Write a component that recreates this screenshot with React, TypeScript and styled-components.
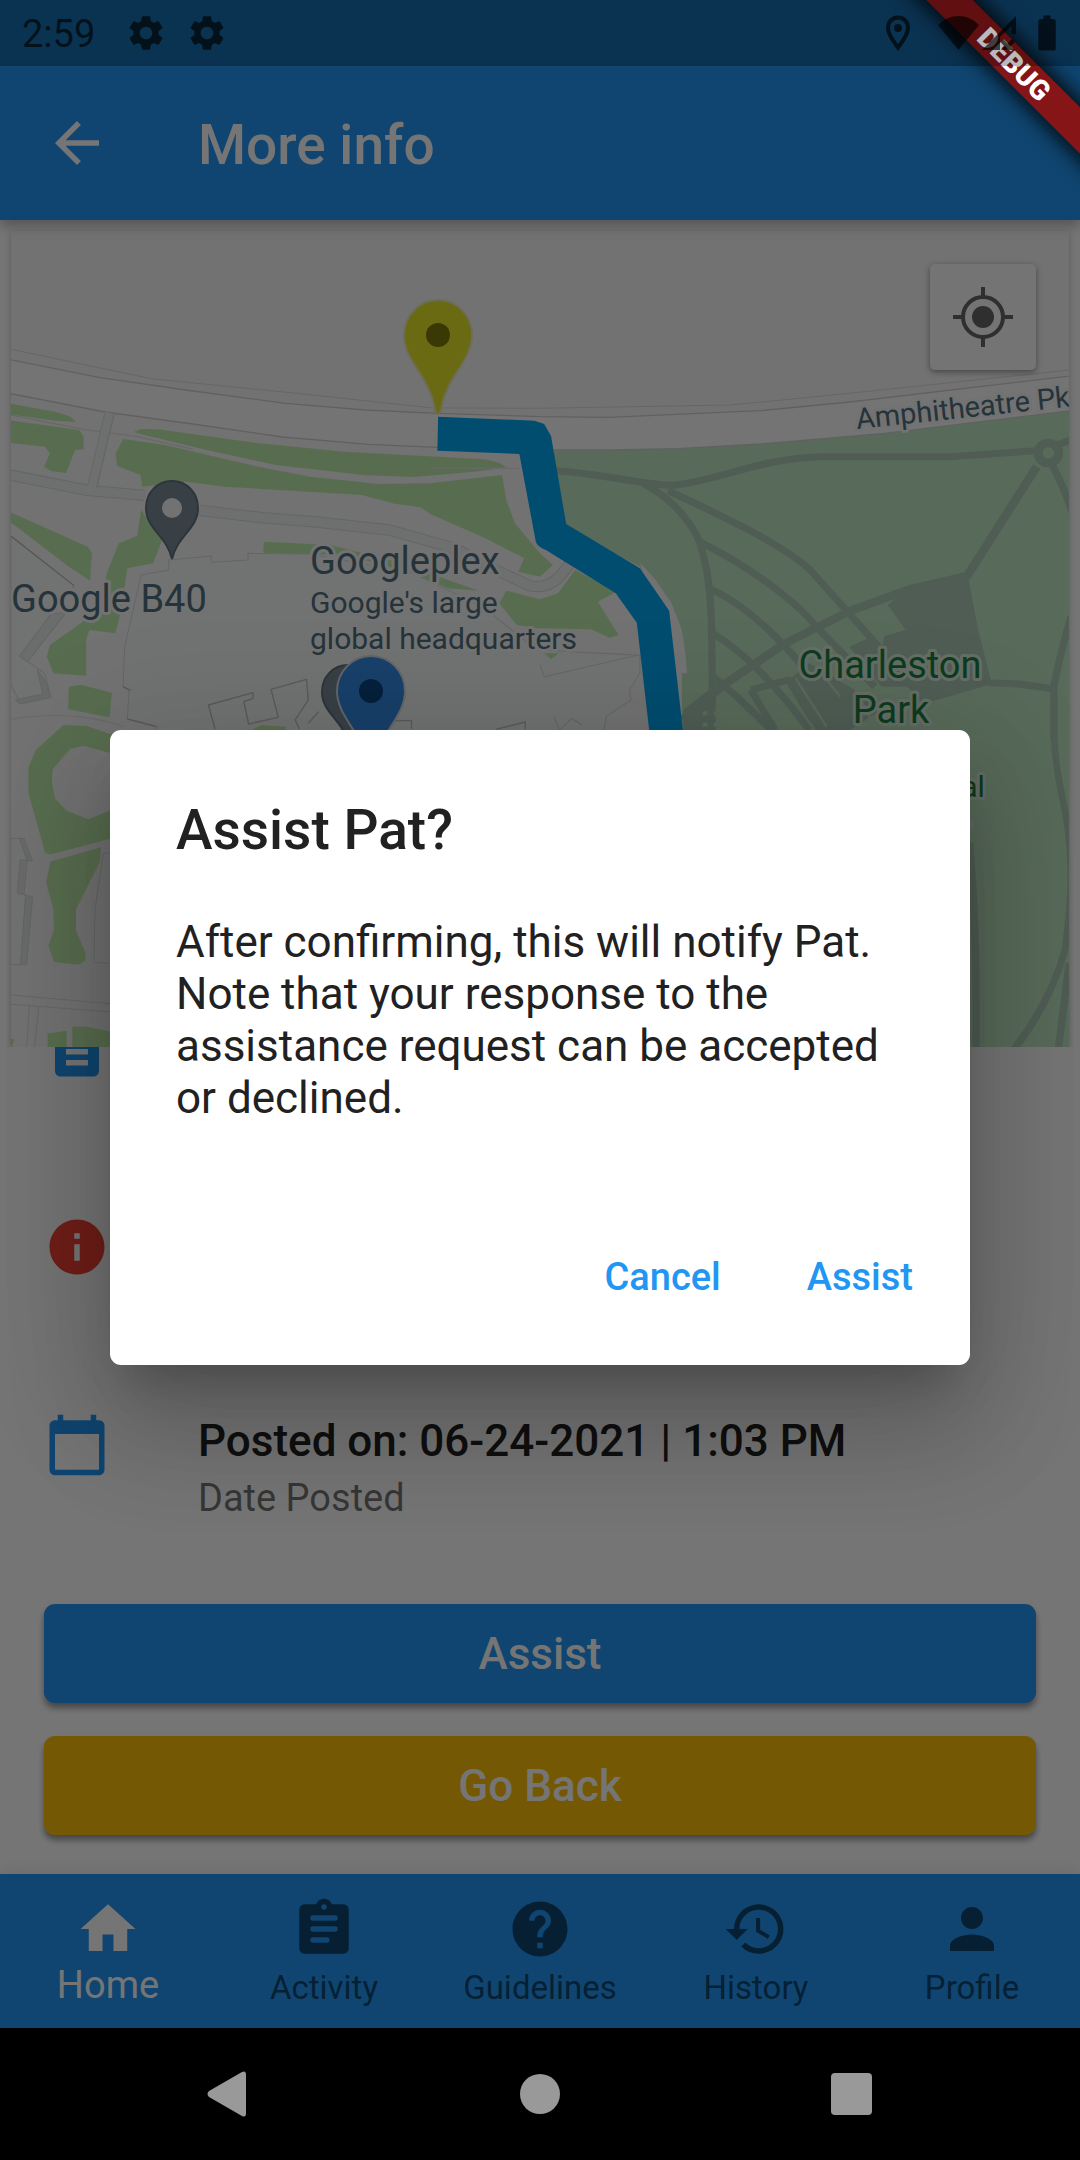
import React from "react";
import styled, { createGlobalStyle } from "styled-components";
import {
  MdArrowBack,
  MdBatteryFull,
  MdCalendarToday,
  MdDescription,
  MdHelp,
  MdHistory,
  MdHome,
  MdInfo,
  MdPerson,
  MdSettings,
} from "react-icons/md";

const blue = "#2196f3";
const amber = "#ffc107";
const red = "#f44336";

const GlobalStyle = createGlobalStyle`
  *, *::before, *::after { box-sizing: border-box; }
  body { margin: 0; background: #000; }
  button { border: 0; padding: 0; font: inherit; cursor: pointer; background: none; }
  svg { display: block; }
`;

const Screen = styled.div`
  position: relative;
  display: flex;
  flex-direction: column;
  height: 100vh;
  min-height: 1600px;
  overflow: hidden;
  background: ${blue};
  font-family: Roboto, "Liberation Sans", sans-serif;
  color: #212121;
`;

/* ---------- system bars ---------- */

const StatusBar = styled.header`
  position: relative;
  z-index: 4;
  flex: none;
  display: flex;
  align-items: center;
  justify-content: space-between;
  height: 66px;
  padding: 0 12px 0 22px;
  background: rgba(0, 0, 0, 0.27);
  color: rgba(0, 0, 0, 0.66);
`;

const StatusGroup = styled.div<{ $gap: number }>`
  display: flex;
  align-items: center;
  gap: ${(p) => p.$gap}px;
`;

const Clock = styled.span`
  font-size: 38px;
  line-height: 44px;
  padding: 2px 11px 0 0;
`;

const SystemNav = styled.footer`
  position: relative;
  z-index: 4;
  flex: none;
  display: flex;
  justify-content: center;
  height: 132px;
  background: #000;
`;

const SystemButton = styled.button`
  display: grid;
  place-items: center;
  width: 312px;
  color: #999;
`;

/* ---------- app bar ---------- */

const AppBar = styled.div`
  position: relative;
  z-index: 1;
  flex: none;
  display: flex;
  align-items: center;
  gap: 88px;
  height: 154px;
  padding: 0 44px;
  background: ${blue};
  color: #fff;
  box-shadow: 0 6px 12px rgba(0, 0, 0, 0.28);
`;

const BackButton = styled.button`
  color: inherit;
`;

const Title = styled.h1`
  margin: 0;
  padding-top: 4px;
  font-size: 55px;
  line-height: 64px;
  font-weight: 500;
`;

/* ---------- page body ---------- */

const Body = styled.main`
  flex: 1;
  min-height: 0;
  display: flex;
  flex-direction: column;
  padding-top: 11px;
  background: #fff;
`;

const MapCard = styled.section`
  position: relative;
  flex: 1;
  min-height: 0;
  margin: 0 11px;
  background: #f8f8f8;
  box-shadow: 0 2px 6px rgba(0, 0, 0, 0.25);
`;

const MapCanvas = styled.svg`
  width: 100%;
  height: 100%;
`;

const LocateButton = styled.button`
  position: absolute;
  top: 33px;
  right: 33px;
  display: grid;
  place-items: center;
  width: 106px;
  height: 106px;
  border-radius: 5px;
  background: #fdfdfd;
  color: #666;
  box-shadow: 0 2px 6px rgba(0, 0, 0, 0.4);
`;

const DetailList = styled.div`
  position: relative;
  flex: none;
  display: flex;
  flex-direction: column;
  justify-content: flex-end;
  height: 519px;
  overflow: hidden;
  background: #fff;
`;

const DetailRow = styled.div`
  flex: none;
  display: flex;
  gap: 88px;
  height: 198px;
  padding: 44px;
`;

const RowIcon = styled.div<{ $color: string }>`
  color: ${(p) => p.$color};
`;

const RowTitle = styled.div`
  padding-top: 1px;
  font-size: 44px;
  line-height: 56px;
  font-weight: 500;
`;

const RowCaption = styled.div`
  font-size: 38px;
  line-height: 58px;
  color: rgba(0, 0, 0, 0.54);
`;

const Actions = styled.div`
  flex: none;
  display: flex;
  flex-direction: column;
  gap: 33px;
  padding: 38px 44px 39px;
`;

const ActionButton = styled.button<{ $color: string }>`
  height: 99px;
  border-radius: 11px;
  background: ${(p) => p.$color};
  color: #fff;
  font-size: 44px;
  line-height: 52px;
  font-weight: 500;
  box-shadow: 0 5px 6px rgba(0, 0, 0, 0.4);
`;

/* ---------- tabs ---------- */

const TabBar = styled.nav`
  position: relative;
  flex: none;
  display: grid;
  grid-template-columns: repeat(5, 1fr);
  height: 154px;
  background: ${blue};
  box-shadow: 0 -3px 16px rgba(0, 0, 0, 0.08);
`;

const Tab = styled.a<{ $active?: boolean }>`
  display: flex;
  flex-direction: column;
  align-items: center;
  justify-content: space-between;
  padding: 22px 0 20px;
  text-decoration: none;
  color: ${(p) => (p.$active ? "#fff" : "rgba(0, 0, 0, 0.54)")};
  font-size: ${(p) => (p.$active ? 38 : 33)}px;
  line-height: ${(p) => (p.$active ? 46 : 40)}px;
`;

/* ---------- dialog ---------- */

const Scrim = styled.div`
  position: absolute;
  inset: 0;
  z-index: 2;
  display: flex;
  align-items: center;
  padding: 66px 110px 132px;
  background: rgba(0, 0, 0, 0.54);
`;

const Dialog = styled.section`
  flex: 1;
  padding: 68px 24px 38px 66px;
  border-radius: 11px;
  background: #fff;
  box-shadow:
    0 30px 41px -19px rgba(0, 0, 0, 0.2),
    0 66px 104px 8px rgba(0, 0, 0, 0.14),
    0 25px 127px 22px rgba(0, 0, 0, 0.12);
`;

const DialogTitle = styled.h2`
  margin: 0 0 54px;
  font-size: 55px;
  line-height: 64px;
  font-weight: 500;
`;

const DialogText = styled.p`
  margin: 0 42px 104px 0;
  font-size: 44px;
  line-height: 52px;
`;

const DialogActions = styled.div`
  display: flex;
  justify-content: flex-end;
  gap: 20px;
`;

const TextButton = styled.button`
  height: 99px;
  padding: 0 33px;
  color: ${blue};
  font-size: 38px;
  line-height: 46px;
  font-weight: 500;
`;

/* ---------- debug ribbon ---------- */

const RibbonCorner = styled.div`
  position: absolute;
  top: 0;
  right: 0;
  z-index: 3;
  width: 220px;
  height: 220px;
  overflow: hidden;
  pointer-events: none;
`;

const Ribbon = styled.div`
  position: absolute;
  top: 48px;
  right: -90px;
  width: 312px;
  height: 33px;
  transform: rotate(45deg);
  background: #851516;
  box-shadow: 0 0 18px 6px rgba(0, 0, 0, 0.75);
  color: #fff;
  font-size: 28px;
  line-height: 33px;
  font-weight: 900;
  text-align: center;
`;

/* ---------- icons ---------- */

const PlaceIcon = () => (
  <svg width="42" height="42" viewBox="0 0 42 42" aria-hidden="true">
    <path
      d="M18 5.500C11.500 5.500 8 10.500 8 16C8 23 14 30 18 35.500C22 30 28 23 28 16C28 10.500 24.500 5.500 18 5.500Z"
      fill="none"
      stroke="currentColor"
      strokeWidth="4"
    />
    <circle cx="18" cy="16" r="4" fill="currentColor" />
  </svg>
);

const RadioIcon = () => (
  <svg width="88" height="42" viewBox="0 0 88 42" fill="currentColor" aria-hidden="true">
    <path d="M8 13C20 1 37 1 49 13L28.500 38Z" />
    <path fillRule="evenodd" d="M52 38 86 4V22H81.500V14L70 25V38Z" />
    <path d="M73 27l4.500 4.500L82 27l3 3-4.500 4.500L85 38H79l-1.500-1.500L76 38h-5l3.500-3.500-4-4.500z" />
  </svg>
);

const LocateIcon = () => (
  <svg width="60" height="60" viewBox="0 0 60 60" aria-hidden="true">
    <circle cx="30" cy="30" r="20" fill="none" stroke="currentColor" strokeWidth="4" />
    <circle cx="30" cy="30" r="11" fill="currentColor" />
    <path d="M30 0V10M30 50V60M0 30H10M50 30H60" stroke="currentColor" strokeWidth="4" />
  </svg>
);

const ClipboardIcon = () => (
  <svg width="66" height="66" viewBox="0 0 24 24" aria-hidden="true">
    <path
      fill="currentColor"
      fillRule="evenodd"
      d="M19 3h-4.180C14.400 1.840 13.300 1 12 1s-2.400.84-2.820 2H5c-1.100 0-2 .9-2 2v14c0 1.100.9 2 2 2h14c1.100 0 2-.9 2-2V5c0-1.100-.9-2-2-2zM12 3a1 1 0 1 1 0 2 1 1 0 0 1 0-2zM8 7h8a1 1 0 0 1 0 2H8a1 1 0 0 1 0-2zM8 11h8a1 1 0 0 1 0 2H8a1 1 0 0 1 0-2zM8 15h5a1 1 0 0 1 0 2H8a1 1 0 0 1 0-2z"
    />
  </svg>
);

type PinProps = { x: number; y: number; fill: string; dot: string; edge: string };

const Pin = ({ x, y, fill, dot, edge }: PinProps) => (
  <g transform={`translate(${x} ${y})`}>
    <path
      d="M0-35C19-35 34-19 34 0C34 26 8 42 3 74Q2 79 0 79T-3 74C-8 42-34 26-34 0C-34-19-19-35 0-35Z"
      fill={fill}
      stroke={edge}
      strokeWidth="2"
    />
    <circle r="12" fill={dot} />
  </g>
);

const PlacePin = ({ x, y }: { x: number; y: number }) => (
  <g transform={`translate(${x} ${y})`}>
    <path
      d="M0-27C15-27 26-15 26 0C26 21 5 28 0 51C-5 28-26 21-26 0C-26-15-15-27 0-27Z"
      fill="#7a8d9a"
      stroke="#5f7480"
      strokeWidth="2"
    />
    <circle r="10" fill="#f8f8f8" />
  </g>
);

const grass = "#bfeeac";
const park = "#c0e6c2";
const path = "#accbb7";
const slate = "#52707e";

const StreetMap = () => (
  <MapCanvas
    viewBox="11 231 1058 816"
    preserveAspectRatio="xMidYMid slice"
    role="img"
    aria-label="Map around Googleplex"
  >
    {/* main plane */}
    <g transform="translate(0 220) scale(0.34440 0.33333)" strokeLinejoin="round">
      <path fill="#fdfdfd" d="M0 413 290 473 560 513 830 550 1060 570 1270 580 1570 590 1768 592 2208 572 2468 546 3140 464V568L2568 640 2208 672 1968 686 1768 691H1568L1270 682 1070 673 820 651 560 612 305 576 0 515Z" />
      <path fill={park} d="M1568 691H1768L1968 686 2208 672 2568 640 3140 568V2500H1980V1362L1858 1040 1640 920Z" />
      <g fill="none" stroke="#dedede" strokeWidth="3">
        <path d="M0 381 440 476 860 520 1250 563 1568 565 1740 562 2120 555 2468 520 3140 446" />
        <path stroke="#d2d2d2" strokeWidth="4" d="M0 413 290 473 560 513 830 550 1060 570 1270 580 1570 590 1768 592 2208 572 2468 546 3140 464M0 515 305 576 560 612 820 651 1070 673 1270 682 1568 690H1768L1968 686 2208 672 2568 640 3140 568" />
        <path d="M32 585 240 628 400 650 560 688" />
      </g>

      {/* buildings */}
      <g fill="#f6faf9" stroke="#d9dcdc" strokeWidth="3">
        <path d="M410 1065 490 1050V1020L613 1008 615 1027 720 1020V1000L900 1002 1200 1060 1400 1160 1560 1290 1858 1306V1360L1828 1410 1832 1440 1760 1490 1750 1560H455V1520L370 1497 375 1410 357 1400 362 1280Z" />
        <path d="M32 950 215 1097 150 1180 57 1308 130 1360 148 1432 60 1450 32 1396Z" />
        <path fill="#e9eeed" d="M150 1180 57 1308 80 1325 190 1180Z" />
        <path fill="#e2e4e4" d="M108 1350 130 1380 148 1432 60 1452 45 1440 124 1422Z" />
        <path fill="none" d="M1568 1335 1580 1370 1728 1335 1850 1306M1608 1490 1625 1530 1660 1495 1690 1515" />
        <path fill="none" stroke="#c2c4c4" strokeWidth="4" d="M625 1528 605 1455 735 1418V1435L708 1445 722 1512 808 1492 787 1408 890 1378 895 1440 857 1500 870 1528M1120 1502H1195V1528M1440 1528 1525 1506V1528M925 1475 895 1510M357 1400 380 1412M370 1497 455 1520" />
      </g>

      {/* lawns */}
      <g fill={grass}>
        <path d="M20 549 160 575 205 590 222 606 160 602 20 582Z" />
        <path d="M20 600 230 630 243 650V688L218 690 192 759 150 754 128 740 145 700 130 680 20 668Z" />
        <path d="M388 636 410 627 460 628 740 668 1000 695 1410 718 1450 728 1470 742 1380 755 1200 771 1060 766 800 735 600 690 420 645Z" />
        <path d="M358 657 480 675 740 738 900 770 1100 792 1250 790 1458 765 1470 840 1495 910 1568 1000 1605 1035 1568 1070 1505 1055 1522 1015 1400 950 1250 883 1222 862 1150 852 1050 825 650 800 540 785 413 800 408 765 340 738 336 700Z" />
        <path d="M20 872 255 980 267 1000 262 1082 200 1040 20 898Z" />
        <path d="M410 870 470 960 445 1030 370 1045 350 1180 335 1240 260 1230 250 1260V1367L155 1360 136 1310 145 1275 240 1205 300 1120 310 1060 345 970 398 948Z" />
        <path d="M200 1400 235 1394 325 1418 318 1492 198 1468Z" />
        <path d="M766 965 960 975 1150 1025 1390 1112 1300 1105 1200 1060 1000 1005 764 998Z" />
        <path d="M1470 1112 1568 1138 1620 1120 1670 1050 1790 1115 1736 1145 1796 1245 1770 1253 1715 1228 1560 1225 1500 1215 1450 1150Z" />
        <path d="M730 1530 760 1516 830 1520 830 1530ZM1580 1300 1622 1300 1600 1318Z" />
      </g>

      {/* service roads */}
      <g fill="none">
        <path stroke="#dadcdc" strokeWidth="34" d="M20 763 255 811 420 826M580 871 760 893 920 906 1130 930 1320 985 1440 1050 1540 1098Q1600 1110 1640 1050L1660 1025" />
        <path stroke="#f0f1f1" strokeWidth="28" d="M20 763 255 811 420 826M580 871 760 893 920 906 1130 930 1320 985 1440 1050 1540 1098Q1600 1110 1640 1050L1660 1025" />
        <path stroke="#dadcdc" strokeWidth="30" d="M318 580 268 800" />
        <path stroke="#f0f1f1" strokeWidth="24" d="M318 578 266 806" />
        <path stroke="#e2e2e2" strokeWidth="3" d="M20 1500Q100 1484 190 1487T360 1520M1250 745H1510" />
        <path stroke="#b8b8b8" strokeWidth="3" d="M32 948 215 1097" />
      </g>

      {/* park paths */}
      <g fill="none" stroke={path} strokeWidth="21">
        <path d="M1600 752C1700 752 1850 792 1950 796C2080 785 2200 716 2380 710H2760L3010 692" />
        <path d="M1868 790C1960 840 2030 930 2040 1000C2070 1100 2068 1250 2068 1530" />
        <path d="M1940 812C2100 890 2310 990 2370 1070L2560 1290 2680 1440" />
        <path d="M2030 965C2160 1030 2310 1140 2370 1220L2540 1400" />
        <path d="M2060 1105C2180 1160 2330 1310 2440 1500" />
        <path d="M2070 1240C2180 1310 2270 1420 2350 1530" />
        <path d="M2070 1370 2140 1430 2240 1530M2180 1410 2250 1530M2180 1410 2290 1380 2360 1500" />
        <path strokeWidth="25" d="M1980 1500 2100 1395 2280 1270 2470 1172 2640 1108 2808 1068 3010 740" />
        <path d="M2870 1388 2960 1392 3065 1408M3060 1560V1400Q3080 1290 3110 1190M3055 735Q3090 800 3120 900M3070 675 3120 655" />
        <circle cx="3044" cy="699" r="30" strokeWidth="26" />
      </g>
      <path fill={path} d="M2640 1100 2800 1060 2812 1075 2840 1230 2880 1392 2700 1446 2560 1290 2568 1248 2630 1230 2578 1155ZM1984 1470 2068 1402V1535H1984ZM2290 1380 2350 1330 2500 1420 2560 1470 2460 1535H2370ZM2466 1280 2530 1250 2640 1400 2560 1400Z" />
      <path fill="none" stroke={park} strokeWidth="7" d="M2310 1375 2400 1520M2370 1340 2440 1430M2440 1320 2530 1500" />
      <g fill={park}>
        {[2040, 2072, 2104, 2136].map((x) => (
          <path key={x} d={`M${x} 1474h14v12h-14zM${x} 1508h14v12h-14z`} />
        ))}
      </g>
      <path fill="#f8f8f8" d="M1858 1028 1900 1075 1950 1150 1980 1230 1990 1300 1995 1360 1960 1362 1900 1200Z" />

      {/* route */}
      <path fill="#03a9f4" d="M1272 590 1552 602 1580 612 1600 648 1644 912 1858 1045 1943 1172 1984 1540H1886L1849 1208 1788 1120 1585 990Q1560 980 1556 966L1508 702 1270 692Z" />
    </g>

    {/* south-west corner */}
    <g transform="translate(0 680) scale(0.33333 0.45920)">
      <g fill={grass}>
        <path fillRule="evenodd" d="M85 190 108 152 190 98 260 100 360 125V340L150 380 135 375 85 245ZM158 195 210 150 250 143 360 165V275L265 303 200 285 165 258 156 225Z" />
        <path d="M303 364 300 395 228 500V545L257 595 255 612 235 620 162 614 145 578 162 545 160 500 138 440 152 395Z" />
        <path d="M143 770 200 764V800H143ZM217 755H260L350 768V800H217ZM30 782H42L36 800H30Z" />
      </g>
      <g fill="#f6faf9" stroke="#d4d6d6" strokeWidth="2">
        <path d="M32 345H60L80 390 55 465 77 468 62 620H32Z" />
        <path fill="#e6e8e8" d="M58 345H72L98 394H82ZM60 392H82L72 468 98 472 80 620H62L77 468 52 464Z" />
        <path d="M350 375 310 378 285 500 282 615 350 618Z" />
        <path fill="none" d="M32 686 350 706M32 706 350 724M88 710 80 798M116 712 104 798" />
      </g>
    </g>

    {/* south-east corner */}
    <g transform="translate(940 700) scale(0.33333 0.44640)" fill="none" stroke={path} strokeWidth="22">
      <path d="M343 0Q335 110 365 210C400 330 400 420 375 560Q330 680 220 784" strokeWidth="20" />
      <path d="M387 590 355 784M88 320Q112 500 108 784" />
    </g>

    {/* markers */}
    <PlacePin x={348} y={692} />
    <Pin x={371} y={691} fill="#368be8" dot="#0d4680" edge="#d8dde2" />
    <Pin x={438} y={335} fill="#e8e62b" dot="#7f7d0e" edge="#eeeeb8" />
    <PlacePin x={172} y={508} />

    {/* labels */}
    <g
      fontFamily="Roboto, Liberation Sans, sans-serif"
      fontSize="38"
      fill={slate}
      stroke="#f8f8f8"
      strokeWidth="6"
      strokeLinejoin="round"
      paintOrder="stroke"
    >
      <text x="11" y="612">Google B40</text>
      <text x="310" y="574">Googleplex</text>
      <text x="310" y="613" fontSize="30">Google's large</text>
      <text x="310" y="649" fontSize="30">global headquarters</text>
      <text x="857" y="429" fontSize="29" transform="rotate(-6 857 429)">Amphitheatre Pkwy</text>
      <g fill="#1c8443" textAnchor="middle" stroke="#dfeee0">
        <text x="890" y="678">Charleston</text>
        <text x="891" y="723">Park</text>
        <text x="973" y="797" fontSize="30">al</text>
      </g>
      <circle cx="966" cy="825" r="8" stroke="none" fill="#dfe3df" />
    </g>
  </MapCanvas>
);

const tabs = [
  { label: "Home", icon: <MdHome size={66} />, active: true },
  { label: "Activity", icon: <ClipboardIcon /> },
  { label: "Guidelines", icon: <MdHelp size={66} /> },
  { label: "History", icon: <MdHistory size={66} /> },
  { label: "Profile", icon: <MdPerson size={66} /> },
];

export default function App() {
  return (
    <>
      <GlobalStyle />
      <Screen>
        <StatusBar>
          <StatusGroup $gap={19}>
            <Clock>2:59</Clock>
            <MdSettings size={42} />
            <MdSettings size={42} />
          </StatusGroup>
          <StatusGroup $gap={8}>
            <PlaceIcon />
            <RadioIcon />
            <MdBatteryFull size={42} />
          </StatusGroup>
        </StatusBar>

        <AppBar>
          <BackButton aria-label="Back">
            <MdArrowBack size={66} />
          </BackButton>
          <Title>More info</Title>
        </AppBar>

        <Body>
          <MapCard>
            <StreetMap />
            <LocateButton aria-label="My location">
              <LocateIcon />
            </LocateButton>
          </MapCard>

          <DetailList>
            <DetailRow>
              <RowIcon $color={blue}>
                <MdDescription size={66} />
              </RowIcon>
            </DetailRow>
            <DetailRow>
              <RowIcon $color={red}>
                <MdInfo size={66} />
              </RowIcon>
            </DetailRow>
            <DetailRow>
              <RowIcon $color={blue}>
                <MdCalendarToday size={66} />
              </RowIcon>
              <div>
                <RowTitle>Posted on: 06-24-2021 | 1:03 PM</RowTitle>
                <RowCaption>Date Posted</RowCaption>
              </div>
            </DetailRow>
          </DetailList>

          <Actions>
            <ActionButton $color={blue}>Assist</ActionButton>
            <ActionButton $color={amber}>Go Back</ActionButton>
          </Actions>
        </Body>

        <TabBar>
          {tabs.map((tab) => (
            <Tab key={tab.label} href="#" $active={tab.active}>
              {tab.icon}
              <span>{tab.label}</span>
            </Tab>
          ))}
        </TabBar>

        <SystemNav>
          <SystemButton aria-label="System back">
            <svg width="42" height="46" viewBox="0 0 42 46" fill="currentColor">
              <path d="M35 1Q39-1 39 4V42Q39 47 35 45L2 26Q-1 23 2 20Z" />
            </svg>
          </SystemButton>
          <SystemButton aria-label="System home">
            <svg width="42" height="42" viewBox="0 0 42 42" fill="currentColor">
              <circle cx="21" cy="21" r="20" />
            </svg>
          </SystemButton>
          <SystemButton aria-label="Recent apps">
            <svg width="42" height="42" viewBox="0 0 42 42" fill="currentColor">
              <rect width="41" height="42" rx="4" />
            </svg>
          </SystemButton>
        </SystemNav>

        <Scrim>
          <Dialog role="dialog" aria-modal="true" aria-labelledby="assist-title">
            <DialogTitle id="assist-title">Assist Pat?</DialogTitle>
            <DialogText>
              After confirming, this will notify Pat. Note that your response to the assistance
              request can be accepted or declined.
            </DialogText>
            <DialogActions>
              <TextButton>Cancel</TextButton>
              <TextButton>Assist</TextButton>
            </DialogActions>
          </Dialog>
        </Scrim>

        <RibbonCorner>
          <Ribbon>DEBUG</Ribbon>
        </RibbonCorner>
      </Screen>
    </>
  );
}
